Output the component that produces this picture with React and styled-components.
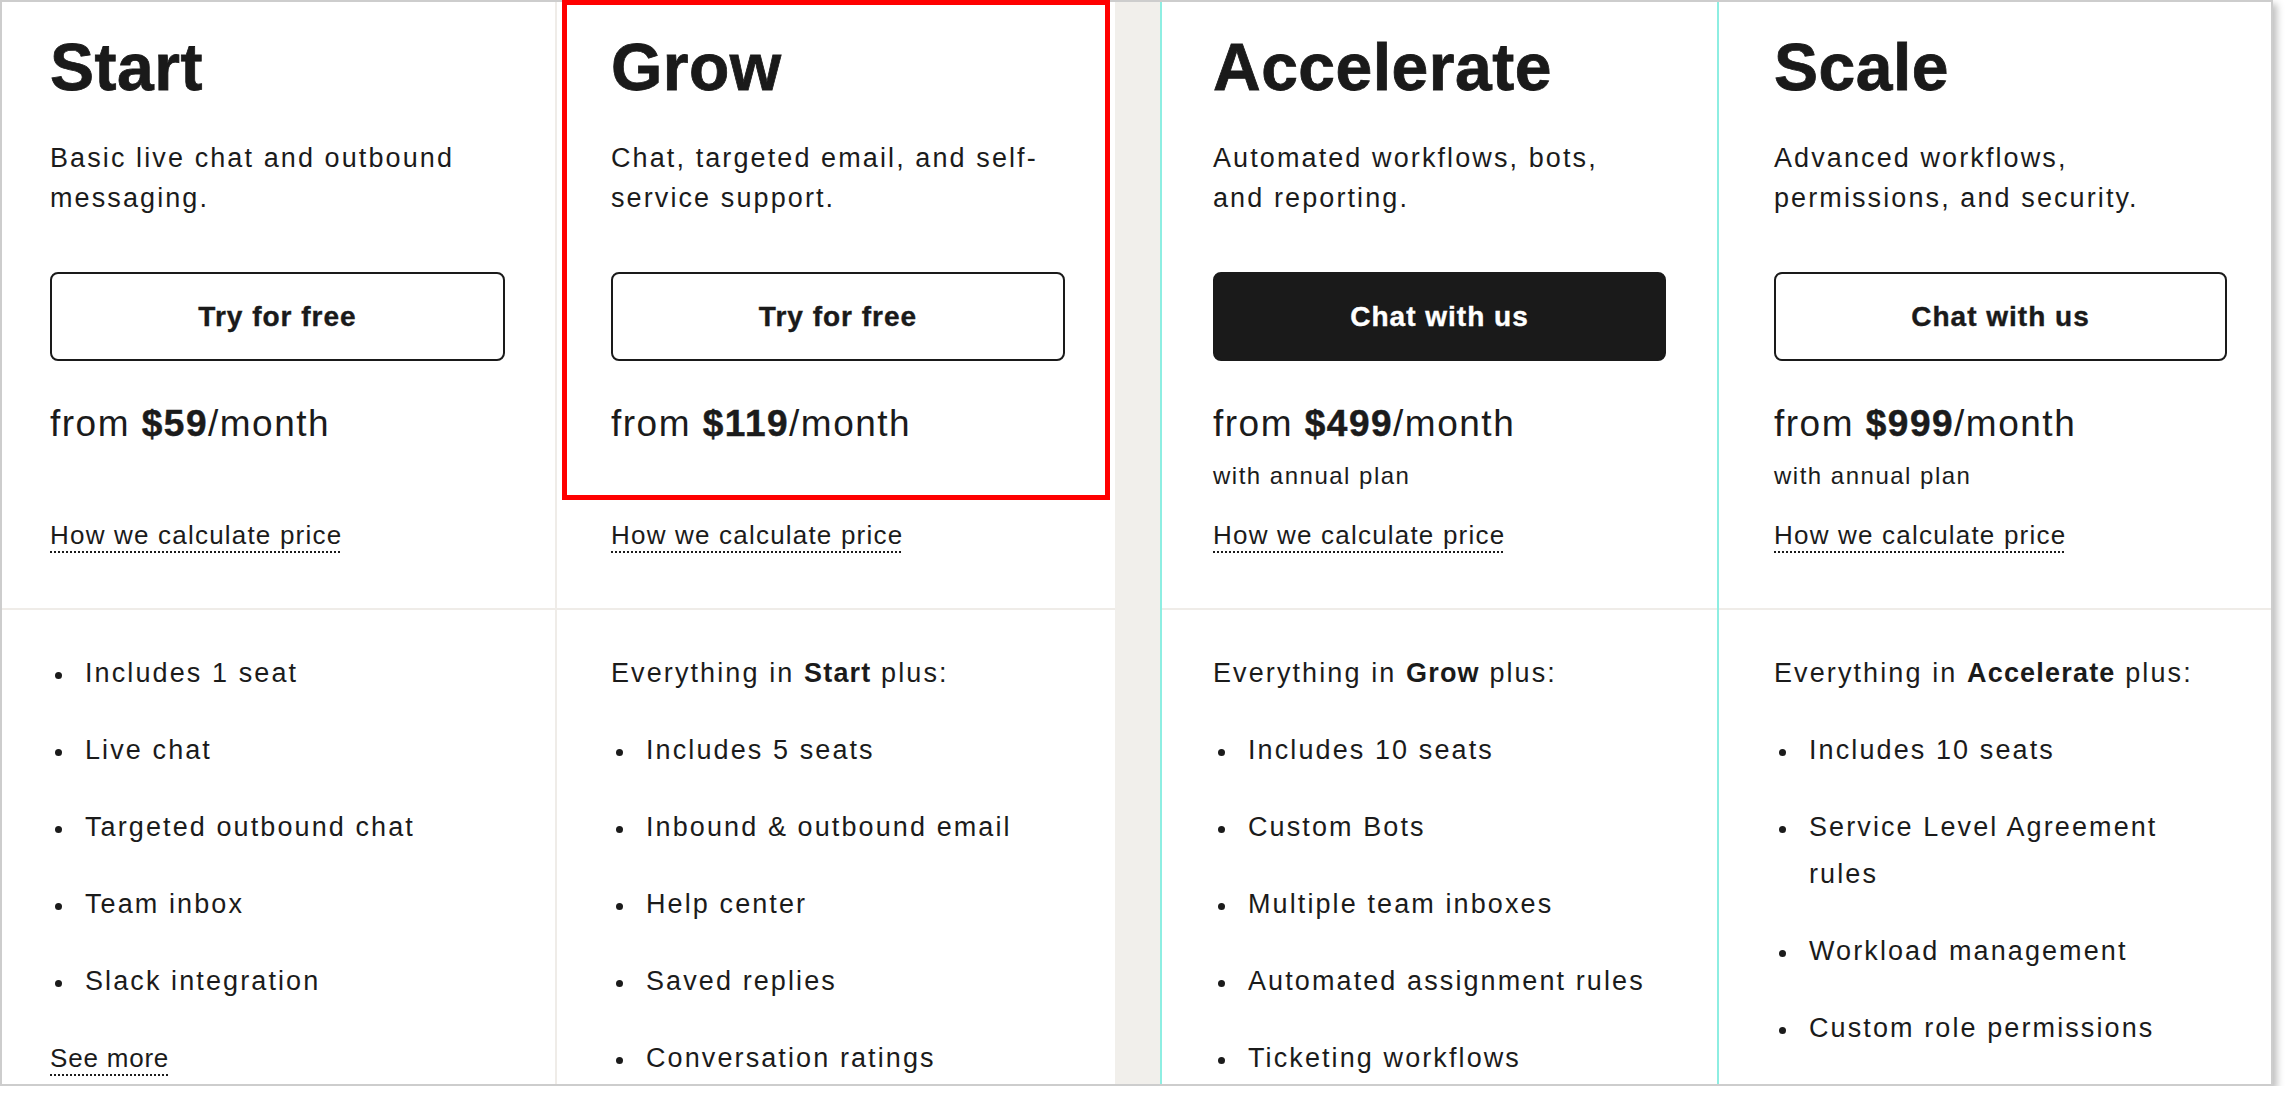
import styled, { createGlobalStyle, css } from 'styled-components';

const plans = [
  {
    name: 'Start',
    description: 'Basic live chat and outbound\nmessaging.',
    cta: 'Try for free',
    price: '$59',
    features: ['Includes 1 seat', 'Live chat', 'Targeted outbound chat', 'Team inbox', 'Slack integration'],
    seeMore: true,
    inset: [48, 50],
  },
  {
    name: 'Grow',
    description: 'Chat, targeted email, and self-\nservice support.',
    cta: 'Try for free',
    price: '$119',
    includes: 'Start',
    features: ['Includes 5 seats', 'Inbound & outbound email', 'Help center', 'Saved replies', 'Conversation ratings'],
    inset: [54, 50],
  },
  {
    name: 'Accelerate',
    description: 'Automated workflows, bots,\nand reporting.',
    cta: 'Chat with us',
    dark: true,
    price: '$499',
    annual: true,
    includes: 'Grow',
    accent: true,
    features: ['Includes 10 seats', 'Custom Bots', 'Multiple team inboxes', 'Automated assignment rules', 'Ticketing workflows'],
    inset: [51, 51],
  },
  {
    name: 'Scale',
    description: 'Advanced workflows,\npermissions, and security.',
    cta: 'Chat with us',
    price: '$999',
    annual: true,
    includes: 'Accelerate',
    features: ['Includes 10 seats', 'Service Level Agreement\nrules', 'Workload management', 'Custom role permissions'],
    inset: [55, 44],
  },
];

const GlobalStyle = createGlobalStyle`
  *, *::before, *::after {
    box-sizing: border-box;
  }

  body {
    margin: 0;
    background: #ffffff;
    color: #1b1b1b;
    font-family: 'Liberation Sans', Arial, sans-serif;
  }
`;

const Card = styled.div`
  position: relative;
  width: 2273px;
  height: 1086px;
  display: grid;
  grid-template-columns: 555px 558px 45px 559px 1fr;
  background: #ffffff;
  border: 2px solid #cdcdcd;
  box-shadow: 4px 4px 7px rgba(0, 0, 0, 0.25);
`;

const Column = styled.section`
  display: flex;
  flex-direction: column;
  min-width: 0;
  overflow: hidden;

  ${({ $divider }) => $divider && css`
    border-right: 2px solid #efece8;
  `}

  ${({ $accent }) => $accent && css`
    border-left: 2px solid #8eeee2;
    border-right: 2px solid #8eeee2;
  `}
`;

const Spacer = styled.div`
  background: #f1efeb;
`;

const Top = styled.div`
  padding: 29px ${({ $inset }) => `${$inset[1]}px 56px ${$inset[0]}px`};
  border-bottom: 2px solid #efece8;
`;

const Title = styled.h2`
  margin: 0;
  font-size: 66px;
  line-height: 72px;
  font-weight: 700;
  letter-spacing: 0.5px;
  color: #1a1a1a;
  -webkit-text-stroke: 0.8px #1a1a1a;
`;

const Description = styled.p`
  margin: 35px 0 0;
  font-size: 27px;
  line-height: 40px;
  letter-spacing: 2.1px;
  white-space: pre-line;
`;

const CtaButton = styled.a`
  margin-top: 54px;
  height: 89px;
  display: flex;
  align-items: center;
  justify-content: center;
  border: 2px solid #1a1a1a;
  border-radius: 8px;
  font-size: 28px;
  font-weight: 700;
  letter-spacing: 1px;
  text-decoration: none;
  color: ${({ $dark }) => ($dark ? '#ffffff' : '#1a1a1a')};
  background: ${({ $dark }) => ($dark ? '#1a1a1a' : '#ffffff')};
  -webkit-text-stroke: 0.4px ${({ $dark }) => ($dark ? '#ffffff' : '#1a1a1a')};
`;

const PriceBlock = styled.div`
  margin-top: 41px;
  height: 116px;
`;

const Price = styled.div`
  font-size: 37px;
  line-height: 44px;
  letter-spacing: 1.5px;

  strong {
    font-weight: 700;
    -webkit-text-stroke: 0.5px #1b1b1b;
  }
`;

const Annual = styled.div`
  margin-top: 14px;
  font-size: 24px;
  line-height: 32px;
  letter-spacing: 1.5px;
`;

const DottedLink = styled.a`
  display: inline-block;
  font-size: 26px;
  line-height: ${({ $tall }) => ($tall ? '47px' : '34px')};
  letter-spacing: ${({ $tall }) => ($tall ? '0.8px' : '1.2px')};
  color: #1b1b1b;
  text-decoration: underline dotted 2px;
  text-underline-offset: 7px;
`;

const Features = styled.div`
  padding: 40px ${({ $inset }) => `${$inset[1]}px 0 ${$inset[0]}px`};
`;

const Intro = styled.p`
  margin: 0 0 30px;
  font-size: 27px;
  line-height: 47px;
  letter-spacing: 2.1px;

  strong {
    font-weight: 700;
    letter-spacing: 1.2px;
  }
`;

const FeatureList = styled.ul`
  margin: 0;
  padding: 0;
  list-style: none;
`;

const FeatureItem = styled.li`
  display: flex;
  margin-bottom: 30px;
  font-size: 27px;
  line-height: 47px;
  letter-spacing: 2.1px;
  white-space: pre-line;

  &::before {
    content: '';
    flex: none;
    width: 7px;
    height: 7px;
    margin: 22px 23px 0 5px;
    border-radius: 50%;
    background: #1b1b1b;
  }
`;

const Highlight = styled.div`
  position: absolute;
  top: -2px;
  left: 560px;
  width: 548px;
  height: 500px;
  border: 5px solid #ff0000;
  pointer-events: none;
`;

const PlanColumn = ({ plan, divider }) => (
  <Column $divider={divider} $accent={plan.accent}>
    <Top $inset={plan.inset}>
      <Title>{plan.name}</Title>
      <Description>{plan.description}</Description>
      <CtaButton href="#" $dark={plan.dark}>{plan.cta}</CtaButton>
      <PriceBlock>
        <Price>
          from <strong>{plan.price}</strong>/month
        </Price>
        {plan.annual && <Annual>with annual plan</Annual>}
      </PriceBlock>
      <DottedLink href="#">How we calculate price</DottedLink>
    </Top>

    <Features $inset={plan.inset}>
      {plan.includes && (
        <Intro>
          Everything in <strong>{plan.includes}</strong> plus:
        </Intro>
      )}
      <FeatureList>
        {plan.features.map((feature) => (
          <FeatureItem key={feature}>{feature}</FeatureItem>
        ))}
      </FeatureList>
      {plan.seeMore && <DottedLink href="#" $tall>See more</DottedLink>}
    </Features>
  </Column>
);

const App = () => (
  <>
    <GlobalStyle />
    <Card>
      <PlanColumn plan={plans[0]} divider />
      <PlanColumn plan={plans[1]} />
      <Spacer aria-hidden="true" />
      <PlanColumn plan={plans[2]} />
      <PlanColumn plan={plans[3]} />
      <Highlight aria-hidden="true" />
    </Card>
  </>
);

export default App;
